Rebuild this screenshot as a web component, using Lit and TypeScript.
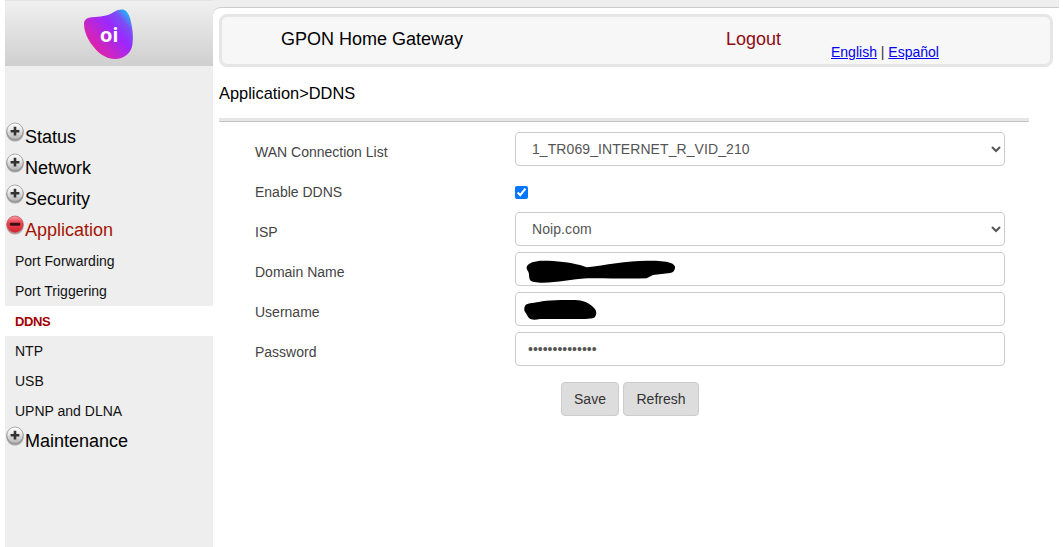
import { LitElement, html, css, svg } from "lit";
import { customElement } from "lit/decorators.js";

const plus = (minus: boolean, id: string) => html`<svg class="ico" width="18" height="20" viewBox="0 0 18 20" aria-hidden="true">
  <defs>
    <linearGradient id="g${id}" x1="0" y1="0" x2="0" y2="1">
      ${minus
        ? svg`<stop offset="0" stop-color="#f6a2aa"/><stop offset=".35" stop-color="#f04a58"/><stop offset="1" stop-color="#d8202e"/>`
        : svg`<stop offset="0" stop-color="#ffffff"/><stop offset=".45" stop-color="#e6e6e6"/><stop offset="1" stop-color="#b4b4b4"/>`}
    </linearGradient>
  </defs>
  <ellipse cx="9" cy="10.8" rx="8.7" ry="8.7" fill="${minus ? "#b89c9c" : "#a4a4a4"}"/>
  <circle cx="9" cy="9.2" r="8.2" fill="url(#g${id})" stroke="${minus ? "#b84a54" : "#8a8a8a"}" stroke-width=".7"/>
  ${minus
    ? svg`<rect x="3.8" y="7.8" width="10.4" height="3" rx="1" fill="#3a1216"/>`
    : svg`<path d="M7.7 4.8h2.6v3.1h3.1v2.6h-3.1v3.1H7.7v-3.1H4.6V7.9h3.1z" fill="#333"/>`}
</svg>`;

@customElement("app-root")
export class AppRoot extends LitElement {
  static styles = css`
    :host {
      display: block;
      height: 547px;
      overflow: hidden;
      background: #fff;
      font-family: "Liberation Sans", Arial, sans-serif;
      color: #000;
    }
    .page {
      display: flex;
      height: 547px;
      padding-left: 5px;
      width: 1054px;
    }
    .side {
      width: 208px;
      flex: none;
      background: #eee;
      display: flex;
      flex-direction: column;
    }
    .logo {
      height: 66px;
      flex: none;
      background: linear-gradient(#f1f0f0, #cfcfcf);
      border-top: 1px solid #e4e4e4;
      box-sizing: border-box;
      display: flex;
      justify-content: center;
    }
    .logo-mark {
      position: relative;
      width: 52px;
      height: 52px;
      margin-top: 8px;
    }
    .logo-mark svg { display: block; }
    .logo-mark span {
      position: absolute;
      left: 17px;
      top: 14px;
      font-size: 20px;
      line-height: 24px;
      font-weight: bold;
      color: #fff;
      font-family: "Inter", "Liberation Sans", sans-serif;
      letter-spacing: 0.5px;
    }
    nav {
      margin-top: 56px;
      display: flex;
      flex-direction: column;
    }
    .top {
      height: 31px;
      display: flex;
      align-items: center;
      padding-left: 1px;
      font-size: 18px;
      position: relative;
    }
    .top .ico {
      flex: none;
      margin-right: 1px;
      margin-top: -11px;
    }
    .top.open { color: #a51505; }
    .sub {
      height: 30px;
      display: flex;
      align-items: center;
      padding-left: 10px;
      font-size: 14px;
      color: #111;
    }
    .sub.on {
      background: #fff;
      color: #a00000;
      font-weight: bold;
      font-size: 13px;
      letter-spacing: -0.4px;
    }
    .main {
      flex: 1;
      min-width: 0;
      display: flex;
      flex-direction: column;
      background: #eee;
    }
    .panel {
      flex: 1;
      margin-top: 7px;
      background: #fff;
      border-top: 1px solid #ccc;
      border-top-left-radius: 8px;
      padding: 6px 0 0 6px;
      box-sizing: border-box;
    }
    .head {
      height: 53px;
      box-sizing: border-box;
      width: 834px;
      border: 3px solid #e6e6e6;
      border-radius: 8px;
      background: #f7f7f7;
      display: flex;
      position: relative;
      font-size: 18px;
    }
    .title {
      margin: 12px 0 0 59px;
      width: 445px;
      flex: none;
      line-height: 21px;
    }
    .logout {
      margin-top: 12px;
      width: 50px;
      flex: none;
      color: #8f0a14;
      line-height: 21px;
    }
    .lang {
      position: absolute;
      left: 609px;
      top: 27px;
      font-size: 14px;
      line-height: 17px;
      color: #333;
    }
    .lang a { color: #00e; text-decoration: underline; }
    .crumb {
      margin-top: 17px;
      font-size: 16.4px;
      line-height: 18px;
    }
    .rule {
      margin-top: 16px;
      width: 810px;
      height: 4px;
      box-sizing: border-box;
      background: #e6e6e6;
      border-bottom: 1px solid #c4c4c4;
    }
    form {
      margin-top: 10px;
      display: flex;
      flex-direction: column;
      padding-left: 36px;
    }
    .row {
      display: flex;
      height: 40px;
      align-items: flex-start;
    }
    label {
      width: 260px;
      flex: none;
      font-size: 14px;
      line-height: 16px;
      padding-top: 12px;
      color: #444;
    }
    .ctl {
      position: relative;
      width: 490px;
      height: 34px;
    }
    select, input[type="text"], input[type="password"] {
      width: 490px;
      height: 34px;
      box-sizing: border-box;
      border: 1px solid #ccc;
      border-radius: 4px;
      background-color: #fff;
      color: #555;
      font: 14px "Liberation Sans", Arial, sans-serif;
      margin: 0;
      display: block;
      outline: none;
    }
    select { padding: 0 12px; letter-spacing: 0.08px; }
    input { padding: 0 12px; }
    input[type="checkbox"] {
      display: block;
      width: 13px;
      height: 13px;
      margin: 14px 0 0;
      accent-color: #0075ff;
    }
    .blot {
      position: absolute;
      left: 0;
      top: 0;
      pointer-events: none;
    }
    .btns {
      display: flex;
      gap: 4px;
      margin: 10px 0 0 306px;
    }
    button {
      height: 34px;
      box-sizing: border-box;
      padding: 0;
      border: 1px solid #ccc;
      border-radius: 4px;
      background: #ddd;
      color: #333;
      font: 14px "Liberation Sans", Arial, sans-serif;
    }
    .save { width: 58px; }
    .refresh { width: 76px; }
  `;

  render() {
    return html`<div class="page">
      <aside class="side">
        <div class="logo">
          <div class="logo-mark">
            <svg width="52" height="52" viewBox="0 0 52 52" aria-hidden="true">
              <defs>
                <linearGradient id="oi" x1="0.12" y1="0.85" x2="0.95" y2="0.1">
                  <stop offset="0" stop-color="#e8209a"/>
                  <stop offset=".28" stop-color="#c825c8"/>
                  <stop offset=".6" stop-color="#9a28ff"/>
                  <stop offset=".82" stop-color="#7a50f5"/>
                  <stop offset="1" stop-color="#18c0ff"/>
                </linearGradient>
              </defs>
              <path fill="url(#oi)" d="M1 14.5C1 10.5 4.5 8.6 9 8.2 17 7.6 24.5 7.2 30 3.5 33.5 1.2 37 0 40 0.6 43.5 1.3 46 5 47.5 11 49.5 19 50.5 27 49.5 35 48.2 45 40 50.5 31 50 22 49.5 14.5 43.5 9.5 36.5 5 30.5 1 23 1 14.5Z"/>
            </svg>
            <span>oi</span>
          </div>
        </div>
        <nav>
          <div class="top">${plus(false, "a")}Status</div>
          <div class="top">${plus(false, "b")}Network</div>
          <div class="top">${plus(false, "c")}Security</div>
          <div class="top open">${plus(true, "d")}Application</div>
          <div class="sub">Port Forwarding</div>
          <div class="sub">Port Triggering</div>
          <div class="sub on">DDNS</div>
          <div class="sub">NTP</div>
          <div class="sub">USB</div>
          <div class="sub">UPNP and DLNA</div>
          <div class="top">${plus(false, "e")}Maintenance</div>
        </nav>
      </aside>
      <main class="main">
        <div class="panel">
          <header class="head">
            <div class="title">GPON Home Gateway</div>
            <div class="logout">Logout</div>
            <div class="lang"><a href="#">English</a> | <a href="#">Español</a></div>
          </header>
          <div class="crumb">Application&gt;DDNS</div>
          <div class="rule"></div>
          <form>
            <div class="row">
              <label>WAN Connection List</label>
              <div class="ctl"><select><option>1_TR069_INTERNET_R_VID_210</option></select></div>
            </div>
            <div class="row">
              <label>Enable DDNS</label>
              <div class="ctl"><input type="checkbox" checked /></div>
            </div>
            <div class="row">
              <label>ISP</label>
              <div class="ctl"><select><option>Noip.com</option></select></div>
            </div>
            <div class="row">
              <label>Domain Name</label>
              <div class="ctl">
                <input type="text" />
                <svg class="blot" width="170" height="34" viewBox="0 0 170 34" aria-hidden="true">
                  <path d="M11.7 14.7C13 11 20 8.7 28 8.7 42 8.7 55 10.5 65 13L71.7 15.3C90 13 112 9 131.7 8.7 140 8.5 150 9 155 10.7 159 12 160.5 14 160 16.3 159.5 19 158 20.5 155 21L138 23 131.7 26.3C112 27 90 26 71.7 26.3 58 27 42 30.7 28 30.7 21 30.7 16.5 30 15 28 13.5 25 14.5 22 13.3 19.7 12.3 18 11.2 16.5 11.7 14.7Z" fill="#000"/>
                </svg>
              </div>
            </div>
            <div class="row">
              <label>Username</label>
              <div class="ctl">
                <input type="text" />
                <svg class="blot" width="100" height="34" viewBox="0 0 100 34" aria-hidden="true">
                  <path d="M10 14C11 11 18 11 24 10 32 8 48 8 60 8 68 8 74 11 78 15 82 18 82 22 80 25 78 27 70 27 60 27 46 27 34 27 25 27 20 28 16 28 14 26 12 24 12 22 10 20 9 18 9 16 10 14Z" fill="#000"/>
                </svg>
              </div>
            </div>
            <div class="row">
              <label>Password</label>
              <div class="ctl"><input type="password" value="aaaaaaaaaaaaaa" /></div>
            </div>
            <div class="btns">
              <button type="button" class="save">Save</button>
              <button type="button" class="refresh">Refresh</button>
            </div>
          </form>
        </div>
      </main>
    </div>`;
  }
}
